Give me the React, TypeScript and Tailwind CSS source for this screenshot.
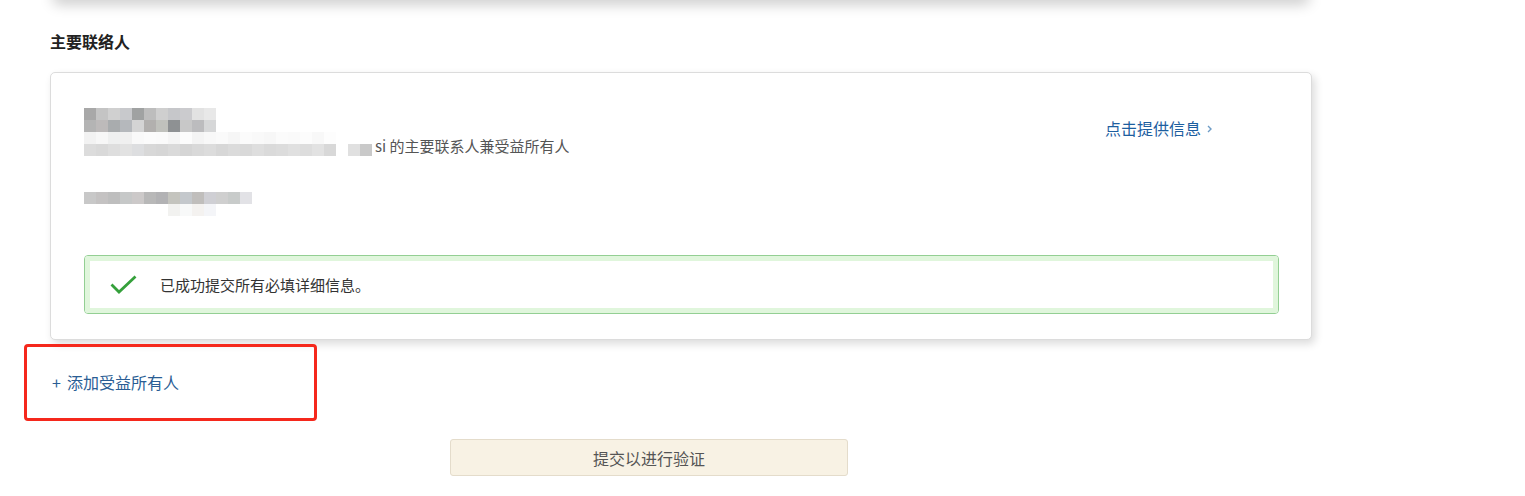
import React from "react";

const nameRows = [
  ["#a8a8a8", "#c4c4c4", "#d0d0d0", "#c8c9cc", "#a0a2a2", "#bdbdbd", "#cfcfcf", "#c6c7ca", "#cbcbce", "#e2e2e2", "#e8e8e8"],
  ["#b4b4b4", "#bdbaba", "#a9acae", "#b5b8bc", "#d4d4d4", "#b2b0ae", "#c0c1bc", "#8e9193", "#c8c8c8", "#bcbcbe", "#d6d7d8"],
];

const companyRows = [
  ["#f2f2f2", "#f7f7f7", "#eff0f0", "#f0f0f0", "#f9f9f9", "#fbfbfb", "#fafafa", "#f5f5f5", "#fcfcfc", "#f4f4f4", "#f8f8f8", "#fafafa", "#f6f6f6", "#fbfbfb", "#f9f9f9", "#f7f7f7", "#fbfbfb", "#fafafa", "#fcfcfc", "#f8f8f8", "#fdfdfd", "#ffffff", "#ffffff", "#ffffff"],
  ["#dcdcdc", "#d9d9d9", "#dedede", "#e2e2e2", "#dddee0", "#d8d8d8", "#d6d6d6", "#dadada", "#d5d5d5", "#d9d9d9", "#dcdcdc", "#d7d7d7", "#dbdbdb", "#d9d9d9", "#dedede", "#dadada", "#dcdcdc", "#e0e0e0", "#dddddd", "#e2e2e2", "#d8d8d8", "#ffffff", "#e0e0e0", "#c9c9c9"],
];

const phoneRows = [
  ["#c8c8c8", "#c4c2c2", "#bebebe", "#c6c8c8", "#ccc9c9", "#b8b8b8", "#b2b2b4", "#c4c4be", "#c4c8cc", "#c0bebc", "#cfcfd4", "#cfcfcf", "#c8cbca", "#e2e2e6"],
  ["transparent", "transparent", "transparent", "transparent", "transparent", "transparent", "transparent", "#f2f2f0", "#f8f9f9", "#f4f2f0", "#f4f5f8"],
];

function Pixelated({ rows }: { rows: string[][] }) {
  return (
    <div className="flex flex-col">
      {rows.map((row, i) => (
        <div key={i} className="flex h-[12px]">
          {row.map((c, j) => (
            <div key={j} className="w-[12px] h-[12px]" style={{ backgroundColor: c }} />
          ))}
        </div>
      ))}
    </div>
  );
}

export default function App() {
  return (
    <div
      className="min-h-[496px] bg-white pl-[50px] pb-[20px]"
      style={{ fontFamily: '"Microsoft YaHei", "Noto Sans CJK SC", sans-serif' }}
    >
      {/* bottom edge of the card above */}
      <div className="w-[1256px] ml-[3px] h-[14px] -mt-[14px] bg-white rounded-b-[5px] shadow-[0_4px_14px_rgba(0,0,0,0.22)]" />

      <h2 className="mt-[31px] text-[16px] leading-[20px] font-bold text-[#222]">主要联络人</h2>

      <div className="mt-[21px] w-[1262px] border border-[#dcdcdc] rounded-[5px] bg-white shadow-[3px_4px_8px_rgba(0,0,0,0.14)] pt-[35px] pb-[25px] pl-[33px] pr-[32px]">
        <div className="flex items-start">
          <div className="flex-1">
            <Pixelated rows={nameRows} />
            <div className="flex items-end">
              <Pixelated rows={companyRows} />
              <span className="ml-[3px] text-[15px] leading-[20px] text-[#555]">si 的主要联系人兼受益所有人</span>
            </div>
            <div className="mt-[36px]">
              <Pixelated rows={phoneRows} />
            </div>
          </div>
          <a className="w-[174px] mt-[9px] flex items-center gap-[6px] text-[16px] leading-[22px] text-[#1d5e9f] cursor-pointer">
            点击提供信息
            <svg width="5" height="8" viewBox="0 0 5 8" className="mt-[1px]">
              <path d="M1 1 L4 4 L1 7" fill="none" stroke="#6e9cc6" strokeWidth="1.4" />
            </svg>
          </a>
        </div>

        <div className="mt-[39px] h-[59px] border border-[#93cf93] rounded-[4px]">
          <div className="h-full border-[5px] border-[#e0f6dc] rounded-[3px] bg-white flex items-center pl-[20px]">
            <svg width="27" height="19" viewBox="0 0 27 19">
              <path d="M1.5 9.5 L9 17 L25.5 1.5" fill="none" stroke="#35a03b" strokeWidth="2.8" />
            </svg>
            <span className="ml-[23px] text-[15px] leading-[20px] text-[#333]">已成功提交所有必填详细信息。</span>
          </div>
        </div>
      </div>

      <div className="mt-[4px] -ml-[26px] w-[293px] h-[77px] border-[3px] border-[#f5281c] rounded-[4px] flex items-center pl-[25px]">
        <a className="text-[16px] leading-[22px] text-[#2a5d94] cursor-pointer mt-[-1px]">
          <span className="mr-[6px]">+</span>添加受益所有人
        </a>
      </div>

      <button className="mt-[18px] ml-[400px] w-[398px] h-[37px] bg-[#f8f2e4] border border-[#e4dccb] rounded-[3px] text-[16px] text-[#555] flex items-center justify-center">
        提交以进行验证
      </button>
    </div>
  );
}
